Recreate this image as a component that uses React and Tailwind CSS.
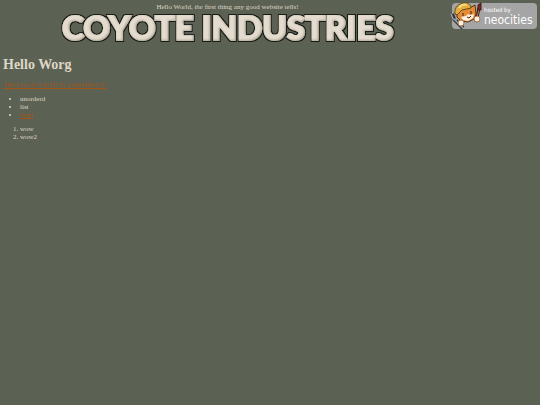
function Logo() {
  return (
    <svg
      viewBox="0 0 344 40"
      className="block w-[344px] max-w-full overflow-visible"
      role="img"
      aria-label="Coyote Industries"
    >
      <defs>
        <filter id="bevel" x="-5%" y="-20%" width="110%" height="140%">
          <feMorphology in="SourceAlpha" operator="dilate" radius="1" result="fat" />
          <feFlood floodColor="#171a15" />
          <feComposite in2="fat" operator="in" result="outline" />
          <feGaussianBlur in="SourceAlpha" stdDeviation="1" result="soft" />
          <feOffset in="soft" dx="-1" dy="-1" result="inner" />
          <feComposite in="SourceGraphic" in2="inner" operator="in" result="lit" />
          <feFlood floodColor="#aaa193" />
          <feComposite in2="SourceAlpha" operator="in" result="shade" />
          <feMerge>
            <feMergeNode in="outline" />
            <feMergeNode in="shade" />
            <feMergeNode in="lit" />
          </feMerge>
        </filter>
      </defs>
      <text
        x="172"
        y="29"
        textAnchor="middle"
        filter="url(#bevel)"
        className="fill-[#e4ddcf] stroke-[#e4ddcf] stroke-2 font-['Lato',sans-serif] text-[33px] font-black"
      >
        COYOTE INDUSTRIES
      </text>
    </svg>
  );
}

function Cat() {
  return (
    <svg viewBox="0 0 32 28" className="h-7 w-8 shrink-0 overflow-visible" aria-hidden="true">
      {/* fork */}
      <path d="M0 12l2 5 9 9" stroke="#34383a" strokeWidth="4" fill="none" />
      <path d="M-1 12l2 5 3 1 1-4M3 18l8 8" stroke="#9aa3a6" strokeWidth="1.5" fill="none" />
      {/* brush */}
      <path d="M24 20l3-14" stroke="#352018" strokeWidth="3" />
      <path d="M24 20l3-13" stroke="#b88455" strokeWidth="1" />
      <path d="M26 8l0-5 3-2 0 7z" fill="#8d2422" stroke="#3d1a19" />
      {/* head and ears */}
      <path
        d="M5 9l0 6 4 4 7 1 6-3 2-5-1-9-5 3-7-2z"
        fill="#e58a35"
        stroke="#5a3518"
      />
      <path d="M9 15l5-1 2-2 2 1 4-1-1 4-5 3-5-1z" fill="#fff0dc" />
      {/* hard hat */}
      <path d="M3 12c-1-7 4-11 10-11 4 0 6 2 6 5l-9 2-5 5z" fill="#e2ae3d" stroke="#6a4a1b" />
      <path d="M7 6c2-3 5-4 8-3" stroke="#f8dc82" strokeWidth="2" fill="none" />
      <path d="M11 11v3M19 9v3M15 15l2 1 2-2" stroke="#30251d" fill="none" />
      {/* paws */}
      <circle cx="9" cy="21" r="3" fill="#fff1df" stroke="#a5714a" />
      <circle cx="25" cy="17" r="3" fill="#fff1df" stroke="#a5714a" />
    </svg>
  );
}

function HostBadge() {
  return (
    <a
      href="#neocities"
      className="flex h-[26px] w-[85px] shrink-0 items-center rounded-sm bg-[#a5a5a5] font-['DejaVu_Sans_Condensed','DejaVu_Sans',sans-serif] text-white"
    >
      <Cat />
      <span className="flex flex-col">
        <span className="text-[6px] leading-[7px]">hosted by</span>
        <span className="text-[12px] leading-[14px]">neocities</span>
      </span>
    </a>
  );
}

export default function App() {
  return (
    <div className="min-h-screen bg-[#5c6253] px-[3px] pt-[3px] font-['Liberation_Serif',serif] text-[7px] leading-[8px] text-[#ded7c7]">
      <header className="flex items-start">
        <div className="flex min-w-0 flex-1 flex-col items-center">
          <p>
            Hello World, <em>the</em> first thing any good website tells!
          </p>
          <Logo />
        </div>
        <HostBadge />
      </header>

      <main>
        <h1 className="mt-[6px] text-[14px] leading-4 font-bold">Hello Worg</h1>
        <p className="mt-2">
          <a href="#larping" className="text-[#a3541a] underline">
            THIS GUY'S SITE IS LARPING!!!!
          </a>
        </p>
        <ul className="mt-[6px] list-disc pl-[17px]">
          <li>unorderd</li>
          <li>list</li>
          <li>
            <a href="#html" className="text-[#a3541a] underline">
              html
            </a>
          </li>
        </ul>
        <ol className="mt-[6px] list-decimal pl-[17px]">
          <li>wow</li>
          <li>wow2</li>
        </ol>
      </main>
    </div>
  );
}
